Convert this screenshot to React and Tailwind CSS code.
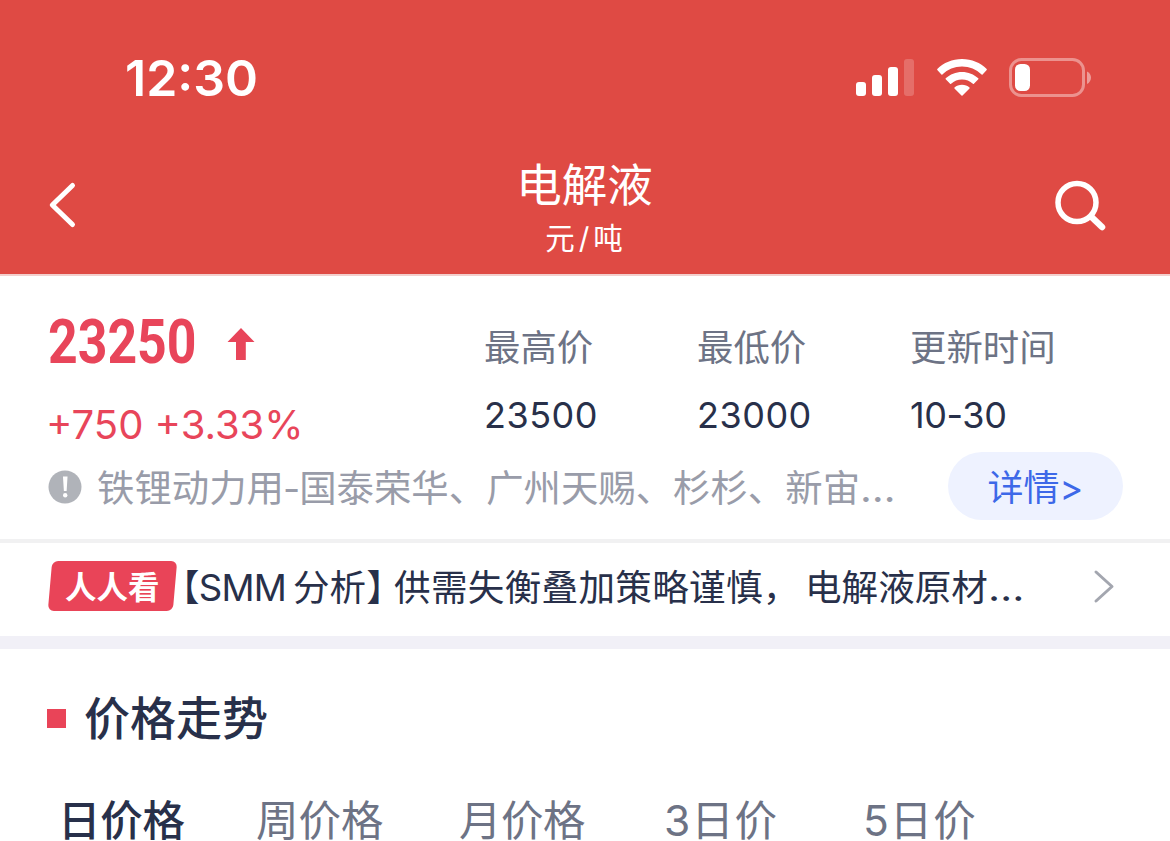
import { useState } from 'react';

const stats = [
  { label: '最高价', value: '23500', width: 'w-[213px]', spacing: 'tracking-[0.5px]' },
  { label: '最低价', value: '23000', width: 'w-[213px]', spacing: 'tracking-[0.5px]' },
  { label: '更新时间', value: '10-30', width: 'w-[160px]', spacing: 'tracking-[-0.4px]' },
];

const tabs = [
  { id: 'day', label: '日价格', width: 'w-[198px]', spacing: 'tracking-[-0.2px]' },
  { id: 'week', label: '周价格', width: 'w-[203px]', spacing: 'tracking-[0px]' },
  { id: 'month', label: '月价格', width: 'w-[205px]', spacing: 'tracking-[-0.5px]' },
  { id: 'day3', label: '3日价', width: 'w-[199px]', spacing: 'tracking-[0.9px]' },
  { id: 'day5', label: '5日价', width: 'w-[140px]', spacing: 'tracking-[0.9px]' },
];

export default function App() {
  return (
    <div className="w-[1170px] h-[841px] overflow-hidden bg-white text-[#28304a] whitespace-nowrap font-['Inter','Noto_Sans_CJK_SC',sans-serif]">
      <header className="h-[276px] bg-[#df4a44] text-white border-b-2 border-[#f3cfcd]">
        <StatusBar />
        <NavBar />
      </header>
      <Quote />
      <News />
      <Trend />
    </div>
  );
}

function StatusBar() {
  return (
    <div className="h-[156px] flex items-center justify-between pl-[125px] pr-[78px]">
      <span className="text-[50px] leading-[60px] font-semibold">12:30</span>
      <div className="flex items-center">
        <svg width="58" height="38" viewBox="0 0 58 38" fill="#fff">
          <rect x="0" y="23" width="10" height="14" rx="3" />
          <rect x="16" y="16" width="10" height="21" rx="3" />
          <rect x="32" y="8" width="10" height="29" rx="3" />
          <rect x="48" y="0" width="10" height="37" rx="3" opacity="0.2" />
        </svg>
        <svg className="ml-[22px]" width="52" height="38" viewBox="0 0 52 38" fill="#fff">
          <path d="M26 0C35.600 0 44.500 3.700 50.700 10.100Q51.100 10.600 50.700 11.100L46.600 15.600Q46.100 16 45.600 15.600C40.300 10.500 33.500 7.600 26 7.600S11.700 10.500 6.400 15.600Q5.900 16 5.400 15.600L1.300 11.100Q.9 10.600 1.300 10.100C7.500 3.700 16.400 0 26 0Z" />
          <path d="M26 13C32.200 13 37.900 15.300 42.300 19.300Q42.700 19.800 42.300 20.300L37.900 24.700Q37.400 25.100 36.900 24.700C33.900 22 30.200 20.500 26 20.500S18.100 22 15.100 24.700Q14.600 25.100 14.100 24.700L9.700 20.300Q9.300 19.800 9.700 19.300C14.100 15.300 19.800 13 26 13Z" />
          <path d="M26 25.800C28.900 25.800 31.500 26.800 33.500 28.500Q34 29 33.500 29.500L26.500 36.600Q26 37 25.500 36.600L18.500 29.500Q18 29 18.500 28.500C20.500 26.800 23.100 25.800 26 25.800Z" />
        </svg>
        <svg className="ml-[21px]" width="83" height="40" viewBox="0 0 83 40">
          <rect x="1.500" y="1.500" width="73" height="36" rx="11" fill="none" stroke="#fff" strokeOpacity="0.4" strokeWidth="3" />
          <rect x="6" y="6" width="15" height="27" rx="5.500" fill="#fff" />
          <path d="M78 13.500C80.500 14.500 82 17 82 19.500S80.500 25 78 26Z" fill="#fff" fillOpacity="0.45" />
        </svg>
      </div>
    </div>
  );
}

function NavBar() {
  return (
    <div className="h-[118px] flex items-start justify-between pl-[48px] pr-[62px]">
      <button className="w-[54px] pt-[25px]" aria-label="返回">
        <svg width="30" height="48" viewBox="0 0 30 48" fill="none" stroke="#fff" strokeWidth="5" strokeLinecap="round" strokeLinejoin="round">
          <path d="M24.500 4.500L4.300 24L24.500 43.500" />
        </svg>
      </button>
      <div className="flex flex-col items-center pl-[13px]">
        <h1 className="text-[45.500px] leading-[60px]">电解液</h1>
        <p className="text-[29.500px] leading-[44px] tracking-[4px] pl-[3px]">元/吨</p>
      </div>
      <button className="w-[54px] pt-[23px]" aria-label="搜索">
        <svg width="54" height="54" viewBox="0 0 54 54" fill="none" stroke="#fff" strokeLinecap="round">
          <circle cx="23" cy="23.500" r="19" strokeWidth="5.500" />
          <path d="M37.500 38L48 48" strokeWidth="6.500" />
        </svg>
      </button>
    </div>
  );
}

function Quote() {
  return (
    <section className="border-b-4 border-[#f1f1f2]">
      <div className="h-[176px] flex pl-[48px]">
        <div className="w-[436px] pt-[36px] text-[#e8455a]">
          <div className="flex items-center h-[60px]">
            <div className="w-[179px]">
              <span className="inline-block origin-left scale-x-[0.835] text-[62px] leading-[60px] font-bold font-['Roboto',sans-serif]">23250</span>
            </div>
            <svg className="mt-[3px]" width="28" height="32" viewBox="0 0 28 32" fill="currentColor">
              <path d="M14 0L27.500 14H18.800V32H9V14H.5Z" />
            </svg>
          </div>
          <p className="-ml-[2px] mt-[23px] text-[40px] leading-[60px]">+750 +3.33%</p>
        </div>
        {stats.map(s => (
          <div key={s.label} className={`${s.width} pt-[48px]`}>
            <div className="text-[36.400px] leading-[48px] text-[#6d7385]">{s.label}</div>
            <div className={`mt-[19px] text-[36px] leading-[48px] ${s.spacing}`}>{s.value}</div>
          </div>
        ))}
      </div>
      <div className="h-[87px] flex items-start pl-[48px] pr-[47px]">
        <svg className="mt-[18px]" width="34" height="34" viewBox="0 0 34 34">
          <circle cx="17" cy="17" r="16.500" fill="#b0b3b9" />
          <path d="M15 6.500H19.500L18.600 21H15.900Z" fill="#fff" />
          <circle cx="17.200" cy="25.300" r="2.200" fill="#fff" />
        </svg>
        <p className="ml-[15px] w-[851px] text-[37.400px] leading-[73px] text-[#999ca9]">
          铁锂动力用<span className="-mx-px">-</span>国泰荣华、广州天赐、杉杉、新宙<span className="inline-block origin-left scale-x-[1.1]">…</span>
        </p>
        <button className="w-[175px] h-[68px] rounded-full bg-[#eef2ff] text-[#3d68e8] text-[36px] leading-[72px]">详情&gt;</button>
      </div>
    </section>
  );
}

function News() {
  return (
    <section className="h-[106px] flex items-center pl-[48px] pr-[54px] pb-[7px] border-b-[13px] border-[#f1f0f7]">
      <div className="w-[129px] h-[50px] px-[2px]">
        <div className="h-full rounded-[6px] bg-[#e94458] -skew-x-[5deg] flex items-center justify-center">
          <span className="skew-x-[5deg] text-[31.500px] leading-[54px] pt-1 font-bold text-white">人人看</span>
        </div>
      </div>
      <p className="-ml-[14px] mt-[3px] flex text-[36.600px] leading-[50px]">
        <span className="w-[130px] tracking-[-0.8px]">【SMM</span>
        <span className="w-[101px]">分析】</span>
        <span className="w-[411px] tracking-[0.3px]">供需失衡叠加策略谨慎，</span>
        <span>电解液原材</span>
        <span className="w-[38px] origin-left scale-x-[1.15]">…</span>
      </p>
      <svg className="ml-auto" width="24" height="36" viewBox="0 0 24 36" fill="none" stroke="#a3a6af" strokeWidth="3" strokeLinecap="round" strokeLinejoin="round">
        <path d="M4 4L20 18.500L4 33" />
      </svg>
    </section>
  );
}

function Trend() {
  const [active, setActive] = useState('day');

  return (
    <section>
      <div className="h-[138px] flex items-center pl-[47px]">
        <span className="w-[19px] h-[19px] bg-[#e94458]" />
        <h2 className="ml-[18px] text-[46px] leading-[60px] font-medium">价格走势</h2>
      </div>
      <div className="h-[54px] flex items-end pl-[58px]">
        {tabs.map(tab => (
          <button
            key={tab.id}
            onClick={() => setActive(tab.id)}
            className={`${tab.width} ${tab.spacing} text-left text-[42.500px] leading-[40px] ${active === tab.id ? 'font-medium text-[#28304a]' : 'text-[#6d7385]'}`}
          >
            {tab.label}
          </button>
        ))}
      </div>
    </section>
  );
}
